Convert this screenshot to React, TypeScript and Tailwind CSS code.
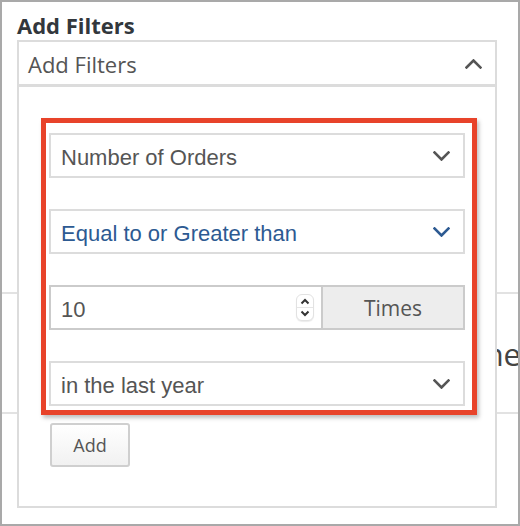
import React from "react";

function Chevron({ up = false, color = "#555" }: { up?: boolean; color?: string }) {
  return (
    <svg width="17" height="10" viewBox="0 0 17 10" className="shrink-0">
      <polyline
        points={up ? "1.5,8.5 8.5,1.5 15.5,8.5" : "1.5,1.5 8.5,8.5 15.5,1.5"}
        fill="none"
        stroke={color}
        strokeWidth="2.6"
        strokeLinecap="square"
      />
    </svg>
  );
}

function SelectBox({ label, blue = false }: { label: string; blue?: boolean }) {
  return (
    <div className="flex h-[45px] items-center justify-between border-2 border-[#dcdcdc] bg-white pl-[10px] pr-[13px]">
      <span
        className={`pt-[4px] font-['Liberation_Sans',Arial,sans-serif] text-[22px] leading-none ${
          blue ? "text-[#2d5a92]" : "text-[#555]"
        }`}
      >
        {label}
      </span>
      <Chevron color={blue ? "#2d5a92" : "#555"} />
    </div>
  );
}

function Spinner() {
  return (
    <div className="flex h-[27px] w-[18px] flex-col items-center justify-between rounded-[6px] border border-[#e2e2e2] bg-white py-[3px] shadow-[0_1px_1px_rgba(0,0,0,0.08)]">
      <svg width="10" height="7" viewBox="0 0 10 7">
        <polyline points="1.5,5.5 5,2 8.5,5.5" fill="none" stroke="#333" strokeWidth="2" />
      </svg>
      <div className="h-px w-full bg-[#e6e6e6]" />
      <svg width="10" height="7" viewBox="0 0 10 7">
        <polyline points="1.5,1.5 5,5 8.5,1.5" fill="none" stroke="#333" strokeWidth="2" />
      </svg>
    </div>
  );
}

export default function App() {
  return (
    <div className="relative h-[526px] w-[520px] overflow-hidden border-2 border-[#a9a9a9] bg-white font-['Open_Sans',sans-serif] text-[#555]">
      <h2 className="pl-[15px] pt-[10px] text-[22px] font-bold leading-[26px] text-[#32373c]">
        Add Filters
      </h2>

      <div className="ml-[15px] mt-[2px] w-[480px] border-x-2 border-t-2 border-b-[3px] border-[#dcdcdc]">
        <div className="flex h-[42px] items-center justify-between pl-[9px] pr-[13px] pt-[2px]">
          <span className="text-[22px] leading-none text-[#555]">Add Filters</span>
          <Chevron up />
        </div>
      </div>

      {/* page content behind the open dropdown */}
      <div className="h-[207px] border-b-2 border-[#e2e2e2]" />
      <div className="flex h-[120px] items-center justify-end overflow-hidden border-b-2 border-[#e2e2e2] pt-[2px]">
        <span className="mr-[-3px] whitespace-nowrap text-[31px] leading-none text-[#444]">
          Name
        </span>
      </div>

      <div className="absolute left-[15px] top-[85px] h-[421px] w-[480px] border-x-2 border-b-2 border-[#dcdcdc] bg-white">
        <div className="ml-[22px] mt-[31px] w-[436px] border-[5px] border-[#e8432a] pb-[4px] pl-[3px] pr-[7px] pt-[10px] shadow-[2px_3px_4px_rgba(0,0,0,0.25)]">
          <div className="flex flex-col gap-[31px]">
            <SelectBox label="Number of Orders" />
            <SelectBox label="Equal to or Greater than" blue />
            <div className="flex h-[45px]">
              <div className="flex flex-1 items-center justify-between border-2 border-[#cbcbcb] bg-white pl-[10px] pr-[7px]">
                <span className="pt-[4px] font-['Liberation_Sans',Arial,sans-serif] text-[22px] leading-none text-[#555]">
                  10
                </span>
                <Spinner />
              </div>
              <div className="flex w-[142px] items-center justify-center border-y-2 border-r-2 border-[#cbcbcb] bg-[#ededed] pt-[2px] text-[21px] leading-none text-[#555]">
                Times
              </div>
            </div>
            <SelectBox label="in the last year" />
          </div>
        </div>

        <button className="ml-[31px] mt-[8px] flex h-[44px] w-[80px] items-center justify-center rounded-[3px] border-2 border-[#cfcfcf] bg-gradient-to-b from-white to-[#f1f1f1] text-[18px] leading-none text-[#555]">
          Add
        </button>
      </div>
    </div>
  );
}
